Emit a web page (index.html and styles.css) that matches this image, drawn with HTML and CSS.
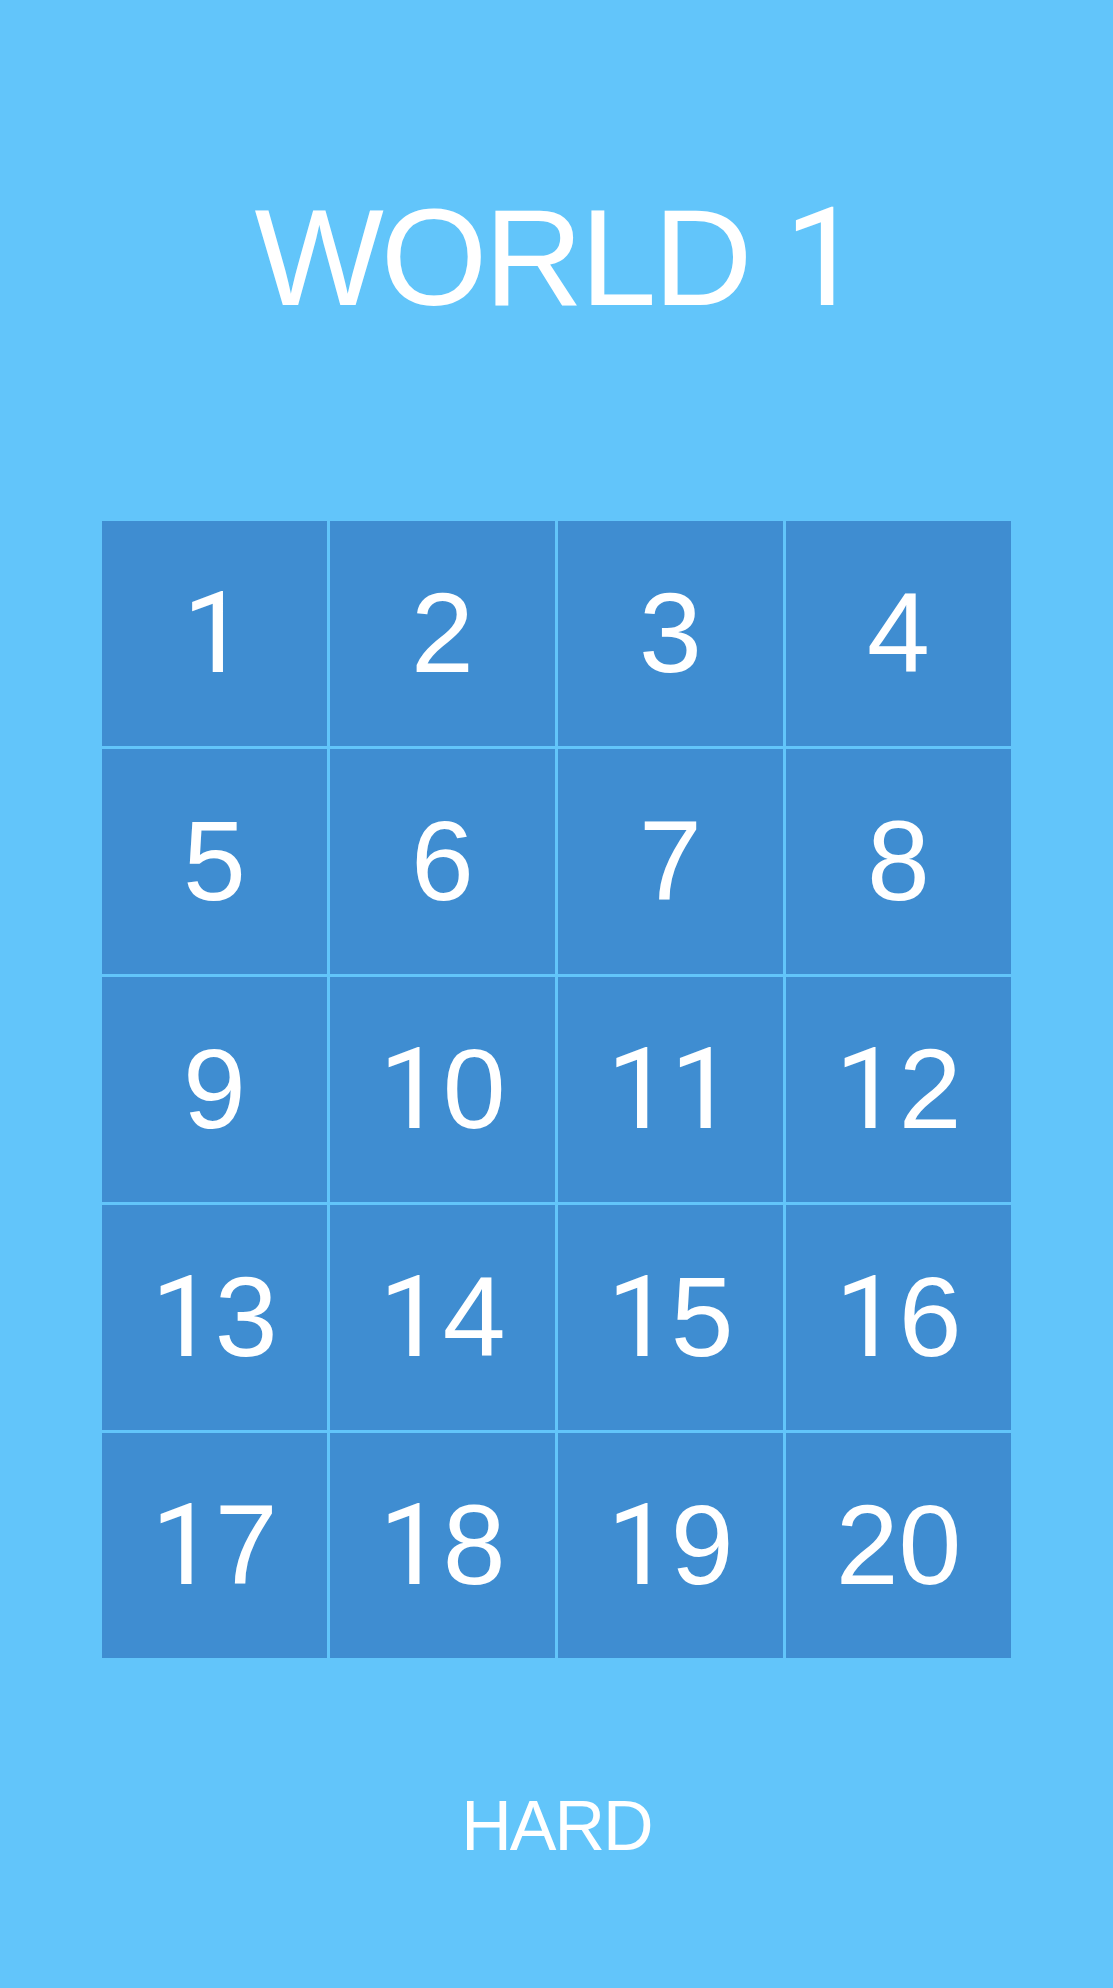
FILE: index.html
```html
<!DOCTYPE html>
<html>
<head>
<meta charset="utf-8">
<link rel="stylesheet" href="styles.css">
</head>
<body>
<main class="screen">
  <h1 class="title">WORLD <span class="one">1</span></h1>
  <div class="levels">
    <div class="level"><span class="one">1</span></div>
    <div class="level">2</div>
    <div class="level">3</div>
    <div class="level">4</div>
    <div class="level">5</div>
    <div class="level">6</div>
    <div class="level">7</div>
    <div class="level">8</div>
    <div class="level">9</div>
    <div class="level"><span class="one">1</span>0</div>
    <div class="level"><span class="one">1</span><span class="one">1</span></div>
    <div class="level"><span class="one">1</span>2</div>
    <div class="level"><span class="one">1</span>3</div>
    <div class="level"><span class="one">1</span>4</div>
    <div class="level"><span class="one">1</span>5</div>
    <div class="level"><span class="one">1</span>6</div>
    <div class="level"><span class="one">1</span>7</div>
    <div class="level"><span class="one">1</span>8</div>
    <div class="level"><span class="one">1</span>9</div>
    <div class="level">20</div>
  </div>
  <div class="difficulty">HARD</div>
</main>
</body>
</html>
```
FILE: styles.css
```css
html, body {
  margin: 0;
  padding: 0;
  background: #62c5fa;
}
.screen {
  width: 1113px;
  height: 1988px;
  box-sizing: border-box;
  padding-top: 189px;
  display: flex;
  flex-direction: column;
  align-items: center;
  font-family: "Liberation Sans", Arial, sans-serif;
  color: #ffffff;
}
.one {
  font-family: Roboto, "Liberation Sans", sans-serif;
  font-weight: 400;
}
.title {
  margin: 0;
  font-size: 137px;
  font-weight: normal;
  line-height: 137px;
  height: 137px;
  letter-spacing: -3px;
}
.levels {
  margin-top: 195px;
  width: 909px;
  display: grid;
  grid-template-columns: repeat(4, 225px);
  grid-auto-rows: 225px;
  gap: 3px;
}
.level {
  background: #3f8dd1;
  display: flex;
  align-items: center;
  justify-content: center;
  font-size: 113px;
  line-height: 1;
}
.difficulty {
  margin-top: 133px;
  font-size: 70px;
  line-height: 70px;
  letter-spacing: -2px;
}
```
